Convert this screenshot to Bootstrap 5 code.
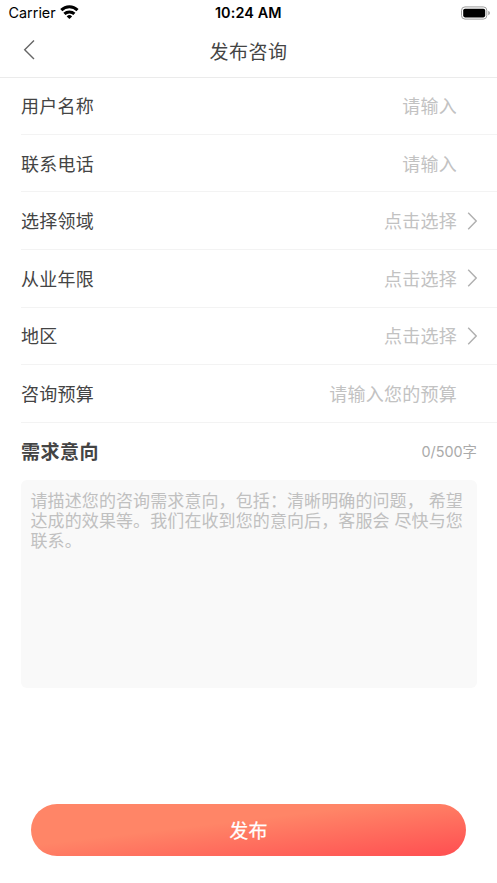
<!DOCTYPE html>
<html lang="zh-CN">
<head>
<meta charset="utf-8">
<meta name="viewport" content="width=device-width, initial-scale=1">
<title>发布咨询</title>
<link href="https://cdn.jsdelivr.net/npm/bootstrap@5.3.0/dist/css/bootstrap.min.css" rel="stylesheet">
<style>
body{font-family:Inter,"Noto Sans CJK SC",sans-serif;color:#444;background:#fff}
.screen{width:497px;height:883px;overflow:hidden}
.status-bar{height:25px;font-size:14.4px;line-height:25px;color:#000;padding:0 7px 0 8.5px}
.status-bar .clock{font-weight:600;letter-spacing:.1px;padding-right:2px}
.title-bar{height:53px;border-bottom:1px solid #ebebeb;padding-left:23px;padding-right:23px}
.title-bar h1{font-size:19px;letter-spacing:.5px;line-height:28px;font-weight:400;padding-top:3px}
.title-bar svg{margin-bottom:3px}
.field-list{padding-left:21px;margin-top:-.8px}
.field-row{height:57.6px;border-bottom:1px solid #f3f3f3;padding-right:20px;font-size:18px;letter-spacing:.25px;line-height:26px}
.field-row span{padding-top:3px}
.field-row .hint{color:#c2c2c2}
.field-row .arrow{width:20px}
.demand-head{height:57.2px;padding:0 20px 0 21px}
.demand-head h2{font-size:19px;letter-spacing:.5px;line-height:28px;font-weight:700;padding-top:3px}
.counter{font-size:14.4px;color:#aaa}
.demand-box{height:208.4px;margin:0 20px 0 20.5px;padding:11.4px 9px 0 10px;background:#f9f9f9;border-radius:6px;font-size:17px;line-height:20px;letter-spacing:.1px;color:#c0c0c0}
.demand-box div{white-space:pre}
.publish,.publish:hover{width:434.6px;height:52.6px;font-size:19px;letter-spacing:.2px;font-weight:400;-webkit-text-stroke:.25px #fff;background:linear-gradient(to bottom right,#ff8567 40%,#ff5353 94%);margin-bottom:26.8px}
.publish span{display:block;padding-top:4px}
</style>
<script src="https://cdn.jsdelivr.net/npm/bootstrap@5.3.0/dist/js/bootstrap.bundle.min.js"></script>
</head>
<body>
<main class="screen d-flex flex-column">
  <div class="status-bar row g-0 align-items-center">
    <div class="col d-flex align-items-center">
      <span>Carrier</span>
      <svg class="ms-1" width="20" height="15" viewBox="0 0 20 15" fill="none" stroke="#000" stroke-width="3"><path d="M1.3 5.1a11.4 11.4 0 0 1 16.2 0M4.4 8.9a7.2 7.2 0 0 1 10 0"/><path d="M9.4 14.1 6.7 11.4a3.9 3.9 0 0 1 5.4 0Z" fill="#000" stroke="none"/></svg>
    </div>
    <div class="col-auto clock">10:24 AM</div>
    <div class="col d-flex justify-content-end align-items-center">
      <svg width="30" height="14" viewBox="0 0 30 14"><rect x="1.5" y=".9" width="25.3" height="12.2" rx="3.5" fill="none" stroke="#9c9c9c"/><rect x="3.2" y="2.7" width="22" height="8.7" rx="1.8"/><path d="M28.4 5v4.2c1.8-.6 1.8-3.6 0-4.2Z" fill="#888"/></svg>
    </div>
  </div>
  <header class="title-bar d-flex align-items-center justify-content-between">
    <svg width="12" height="20" viewBox="0 0 12 20" fill="none" stroke="#666" stroke-width="1.4"><path d="M11 .5 1.7 9.7l9.3 9.3"/></svg>
    <h1 class="mb-0">发布咨询</h1>
    <span class="pe-2 me-1"></span>
  </header>
  <section class="field-list">
    <div class="field-row d-flex align-items-center"><span>用户名称</span><span class="hint ms-auto">请输入</span><span class="arrow"></span></div>
    <div class="field-row d-flex align-items-center"><span>联系电话</span><span class="hint ms-auto">请输入</span><span class="arrow"></span></div>
    <div class="field-row d-flex align-items-center"><span>选择领域</span><span class="hint ms-auto">点击选择</span><svg class="arrow" height="20" viewBox="0 0 20 20" fill="none" stroke="#b0b0b0" stroke-width="1.4"><path d="m11.2 1.7 8 8.3-8 8.3"/></svg></div>
    <div class="field-row d-flex align-items-center"><span>从业年限</span><span class="hint ms-auto">点击选择</span><svg class="arrow" height="20" viewBox="0 0 20 20" fill="none" stroke="#b0b0b0" stroke-width="1.4"><path d="m11.2 1.7 8 8.3-8 8.3"/></svg></div>
    <div class="field-row d-flex align-items-center"><span>地区</span><span class="hint ms-auto">点击选择</span><svg class="arrow" height="20" viewBox="0 0 20 20" fill="none" stroke="#b0b0b0" stroke-width="1.4"><path d="m11.2 1.7 8 8.3-8 8.3"/></svg></div>
    <div class="field-row d-flex align-items-center"><span>咨询预算</span><span class="hint ms-auto">请输入您的预算</span><span class="arrow"></span></div>
  </section>
  <div class="demand-head d-flex align-items-center justify-content-between">
    <h2 class="mb-0">需求意向</h2>
    <span class="counter">0/500字</span>
  </div>
  <div class="demand-box">
    <div>请描述您的咨询需求意向，包括：清晰明确的问题， 希望</div>
    <div>达成的效果等。我们在收到您的意向后，客服会 尽快与您</div>
    <div>联系。</div>
  </div>
  <button type="button" class="publish btn rounded-pill border-0 text-white p-0 mt-auto mx-auto"><span>发布</span></button>
</main>
</body>
</html>
